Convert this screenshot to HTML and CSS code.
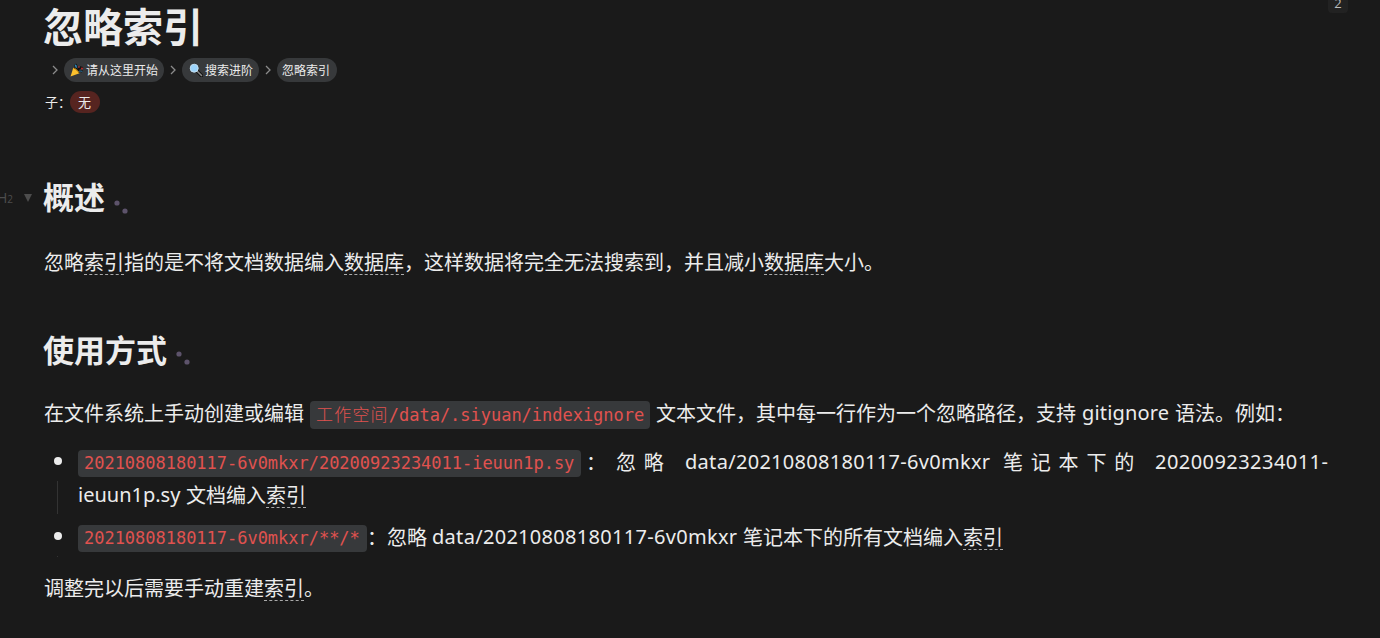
FILE: index.html
```
<!DOCTYPE html>
<html lang="zh-CN">
<head>
<meta charset="utf-8">
<title>忽略索引</title>
<link rel="stylesheet" href="styles.css">
</head>
<body>
<main class="doc">
  <span class="badge">2</span>
  <h1 class="title">忽略索引</h1>
  <nav class="crumbs">
    <svg class="chev" viewBox="0 0 6 10"><path d="M1 1l4 4-4 4"/></svg>
    <a class="pill start"><svg class="emoji" viewBox="0 0 14 14"><path d="M5.500 5.500c1-1 1-2.500-.5-4" fill="none" stroke="#111" stroke-width="3"/><path d="M6 4.800c.6-1 .2-2-.8-3" fill="none" stroke="#2e86b8" stroke-width="1.700"/><path d="M7.500 7l3-2.500 2.500.5M8.500 8.500c1.500-.8 2.800-.6 4 0" fill="none" stroke="#111" stroke-width="2.200"/><path d="M8.800 8.400c1.300-.5 2.300-.4 3.500.2" fill="none" stroke="#2e86b8"/><circle cx="12" cy="5.500" r="1" fill="#c62828"/><circle cx="9" cy="4" r=".8" fill="#c62828"/><path d="M.5 13.500L3.300 4.800Q7.500 6 9.500 10.300z" fill="#fbc02d"/><path d="M3.800 5.300c2 .4 4.500 2.800 5 4.500" fill="none" stroke="#8a5a00" stroke-width="1"/></svg><span>请从这里开始</span></a>
    <svg class="chev" viewBox="0 0 6 10"><path d="M1 1l4 4-4 4"/></svg>
    <a class="pill search"><svg class="emoji" viewBox="0 0 14 14"><path d="M8.500 8.500l4 4" stroke="#111" stroke-width="3.400" stroke-linecap="round"/><path d="M8.500 8.500l4 4" stroke="#888" stroke-width="1.600" stroke-linecap="round"/><circle cx="5.200" cy="5.200" r="4" fill="#9bd3fb" stroke="#c3dff0"/></svg><span>搜索进阶</span></a>
    <svg class="chev" viewBox="0 0 6 10"><path d="M1 1l4 4-4 4"/></svg>
    <a class="pill">忽略索引</a>
  </nav>
  <div class="children"><span class="label">子：</span><span class="pill none">无</span></div>

  <h2 class="heading first"><span class="gutter"><span class="level">H<small>2</small></span><i class="fold"></i></span>概述<svg class="dots" viewBox="0 0 14 14"><circle cx="3" cy="3" r="2.600"/><circle cx="11" cy="11" r="2.600"/></svg></h2>
  <p class="line intro">忽略<span class="ref">索引</span>指的是不将文档数据编入<span class="ref">数据库</span>，这样数据将完全无法搜索到，并且减小<span class="ref">数据库</span>大小。</p>

  <h2 class="heading second">使用方式<svg class="dots" viewBox="0 0 14 14"><circle cx="3" cy="3" r="2.600"/><circle cx="11" cy="11" r="2.600"/></svg></h2>
  <p class="line usage"><span class="lead">在文件系统上手动创建或编辑</span><code class="code path"><span class="cn">工作空间</span>/data/.siyuan/indexignore</code><span>文本文件，其中每一行作为一个忽略路径，支持</span><span class="latin git">gitignore</span><span>语法。例如：</span></p>

  <ul class="list">
    <li class="item">
      <div class="marker"><i class="bullet"></i><i class="guide"></i></div>
      <div class="content">
        <div class="line"><code class="code long">20210808180117-6v0mkxr/20200923234011-ieuun1p.sy</code><span class="colon">：</span><span class="spread ignore">忽略</span><span class="latin book">data/20210808180117-6v0mkxr</span><span class="spread under">笔记本下的</span><span class="latin file">20200923234011-</span></div>
        <div class="line"><span class="latin tail">ieuun1p.sy</span><span>文档编入<span class="ref">索引</span></span></div>
      </div>
    </li>
    <li class="item">
      <div class="marker"><i class="bullet"></i><i class="guide"></i></div>
      <div class="content">
        <div class="line"><code class="code short">20210808180117-6v0mkxr/**/*</code><span class="desc">：忽略</span><span class="latin book2">data/20210808180117-6v0mkxr</span><span>笔记本下的所有文档编入<span class="ref">索引</span></span></div>
      </div>
    </li>
  </ul>
  <p class="line outro">调整完以后需要手动重建<span class="ref">索引</span>。</p>
</main>
</body>
</html>
```

FILE: styles.css
```
* { box-sizing: border-box; }
body {
  margin: 0;
  height: 638px;
  overflow: hidden;
  background: #1a1a1a;
  color: #ececec;
  font: 20px/32px "Noto Sans CJK SC", sans-serif;
}
.doc { position: relative; padding: 0 43px; white-space: nowrap; }
.badge {
  position: absolute;
  top: -8px;
  left: 1328px;
  width: 20px;
  height: 21px;
  border-radius: 4px;
  background: #222;
  color: #bbb;
  font: 13px/23px "Open Sans", sans-serif;
  text-align: center;
}
.title { margin: 0; height: 58px; font-size: 40px; line-height: 50px; font-weight: 700; }
.crumbs { display: flex; align-items: center; height: 24px; padding-left: 8px; font-size: 12px; }
.chev { width: 6px; height: 10px; margin: 0 6px; fill: none; stroke: #8b8b8b; stroke-width: 1.3; }
.crumbs .chev:first-child { margin-left: 1px; }
.pill {
  display: flex;
  align-items: center;
  height: 24px;
  padding: 0 6px;
  border-radius: 12px;
  background: #37393b;
  font-size: 12px;
  line-height: 24px;
}
.pill:last-child { padding-left: 5px; padding-right: 7px; }
.start { width: 100px; }
.search { width: 77px; }
.emoji { width: 14px; height: 14px; margin: 0 2px 0 0; flex: none; }
.search .emoji { margin-left: 1px; }
.children { display: flex; align-items: center; height: 22px; margin-top: 9px; font-size: 13px; }
.label { width: 27px; padding-left: 2px; }
.children .none { width: 30px; height: 22px; padding: 0 8px; background: #562420; font-size: 13px; }
.heading { position: relative; display: flex; align-items: center; margin: 0; height: 44px; font-size: 31px; line-height: 44px; font-weight: 700; }
.first { margin-top: 61px; }
.second { margin-top: 49px; }
.gutter { position: absolute; left: -46px; top: 0; display: flex; align-items: center; height: 48px; color: #4d4d4d; }
.level { width: 27px; font: 14px/20px "Open Sans", sans-serif; }
.level small { font-size: 10px; }
.fold { border: 4.500px solid transparent; border-top: 8px solid #4d4d4d; border-bottom: 0; }
.dots { width: 14px; height: 14px; margin: 21px 0 0 9px; fill: #5d536b; }
.second .dots { margin-top: 17px; }
.line { display: flex; align-items: center; margin: 0; height: 33px; font-size: 20px; line-height: 32px; }
.intro { margin-top: 27px; padding-left: 1px; }
.usage { margin-top: 25px; padding-left: 1px; }
.outro { margin-top: 18px; padding-left: 1px; }
.ref { display: inline-block; height: 27px; line-height: 28px; border-bottom: 1px dashed #aaa; }
.lead { width: 266px; }
.code {
  height: 27px;
  margin-top: 3px;
  padding: 0 6px;
  border-radius: 4px;
  background: #37393b;
  color: #e0524f;
  font: 17px/27px "DejaVu Sans Mono", "Noto Sans CJK SC", monospace;
  letter-spacing: -.02px;
}
.path { width: 340px; height: 28px; margin: 4px 6px 0 0; line-height: 25px; }
.cn { font-family: "Noto Sans CJK SC", sans-serif; font-weight: 300; letter-spacing: 1.200px; }
.latin { font-family: "Noto Sans", sans-serif; letter-spacing: .3px; }
.git { width: 93px; margin-left: 6px; letter-spacing: .15px; }
.list { list-style: none; margin: 16px 0 0; padding: 0; }
.item { display: flex; margin-bottom: 9px; }
.marker { display: flex; flex-direction: column; align-items: center; width: 29px; margin-right: 6px; padding-top: 12px; }
.bullet { width: 8px; height: 8px; border-radius: 50%; background: #ececec; }
.guide { flex: 1; width: 1px; margin-top: 16px; margin-bottom: -3px; background: #333; }
.item + .item .guide { min-height: 1px; margin-bottom: -4px; }
.long { width: 503px; }
.short { width: 289px; }
.colon { width: 35px; padding-left: 5px; }
.spread { letter-spacing: 7.800px; }
.ignore { width: 69px; }
.book { width: 318px; }
.under { width: 152px; }
.file { letter-spacing: .45px; }
.tail { width: 108px; letter-spacing: 0; }
.desc { width: 65px; }
.book2 { width: 311px; }
```
